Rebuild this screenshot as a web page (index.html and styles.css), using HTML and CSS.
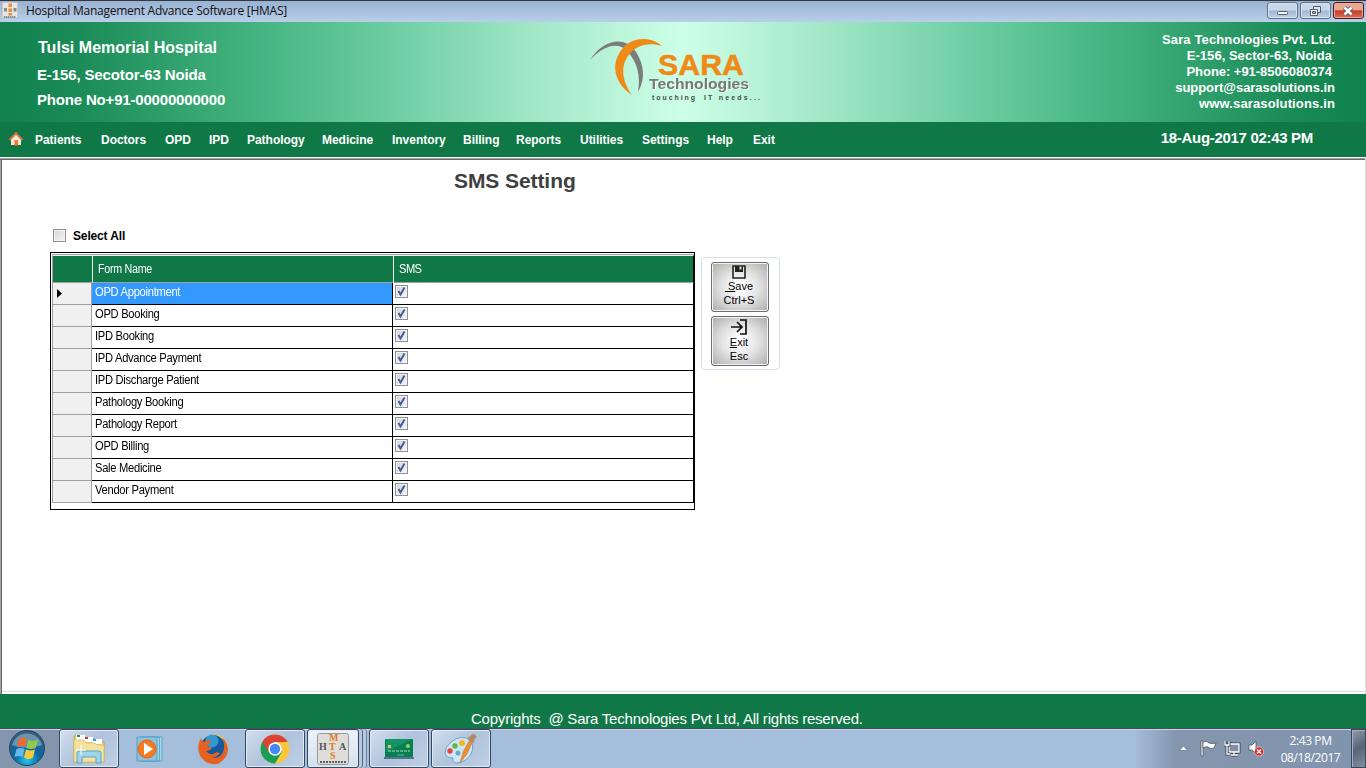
FILE: index.html
```html
<!DOCTYPE html>
<html lang="en">
<head>
<meta charset="utf-8">
<title>Hospital Management Advance Software [HMAS]</title>
<link rel="stylesheet" href="styles.css">
</head>
<body>
<div class="screen">
  <div class="titlebar">
    <svg class="app-icon" width="16" height="16" viewBox="0 0 32 32"><rect x=".5" y=".5" width="31" height="31" rx="2" fill="#e8e6e2" stroke="#aaa"/><path d="M13 3h7v7h-7zM13 13h7v7h-7zM13 22h7v5h-7z" fill="#e39044"/><path d="M4 12h6v7H4zM23 12h6v7h-6z" fill="#8b8781"/><path d="M4 30h24" stroke="#444" stroke-width="2" stroke-dasharray="3 1"/></svg>
    <span class="window-title">Hospital Management Advance Software [HMAS]</span>
    <div class="window-buttons">
      <button class="wbtn"><svg width="28" height="14"><rect x="9.500" y="7.500" width="10" height="3" rx="1" fill="#f8f8f8" stroke="#555b68"/></svg></button>
      <button class="wbtn"><svg width="28" height="14"><path d="M12.500 2.500h7v6h-7z" fill="#dce6f2" stroke="#555b68"/><path d="M9.500 5.500h7v6h-7z" fill="#f8f8f8" stroke="#555b68"/><path d="M11.500 7.500h3v2h-3z" fill="#a5bbd6" stroke="#555b68"/></svg></button>
      <button class="wbtn close"><svg width="28" height="14"><path d="M10.500 3.500l7 7m0-7l-7 7" stroke="#555b68" stroke-width="4.500"/><path d="M10.500 3.500l7 7m0-7l-7 7" stroke="#fff" stroke-width="2.600"/></svg></button>
    </div>
  </div>

  <header class="banner">
    <div class="hospital">
      <div class="h-name">Tulsi Memorial Hospital</div>
      <div class="h-addr">E-156, Secotor-63 Noida</div>
      <div class="h-phone">Phone No+91-00000000000</div>
    </div>
    <svg class="logo" width="180" height="72" viewBox="0 0 180 72">
      <path d="M0 25C12 6 34-1 46 17C56 33 54 47 48 57C51 41 47 27 38 17C28 5 12 12 0 25Z" fill="#7b7b7b"/>
      <path d="M42 60C25 49 19 29 33 13C42 2 61 1 72 11C58 7 46 10 38 21C29 34 34 49 42 60Z" fill="#ef8a17"/>
      <text class="logo-sara" x="68" y="40" textLength="86" lengthAdjust="spacingAndGlyphs">SARA</text>
      <text class="logo-tech" x="59" y="54" textLength="100" lengthAdjust="spacingAndGlyphs">Technologies</text>
      <text class="logo-tag" x="62" y="65" textLength="43">touching</text>
      <text class="logo-tag" x="114" y="65" textLength="56">IT needs...</text>
    </svg>
    <div class="company">
      <div class="c-line c1">Sara Technologies Pvt. Ltd.</div>
      <div class="c-line c2">E-156, Sector-63, Noida</div>
      <div class="c-line c3">Phone: +91-8506080374</div>
      <div class="c-line c4">support@sarasolutions.in</div>
      <div class="c-line c5">www.sarasolutions.in</div>
    </div>
  </header>

  <nav class="menu">
    <svg class="home" width="16" height="16" viewBox="0 0 16 16"><path d="M3 8v6h10V8L8 3z" fill="#efe9e4"/><path d="M1.500 9L8 2.200 14.500 9" fill="none" stroke="#d9703c" stroke-width="2"/><rect x="6.500" y="9" width="3.500" height="5.500" fill="#f07a1c"/></svg>
    <div class="menu-items"><a>Patients</a><a>Doctors</a><a>OPD</a><a>IPD</a><a>Pathology</a><a>Medicine</a><a>Inventory</a><a>Billing</a><a>Reports</a><a>Utilities</a><a>Settings</a><a>Help</a><a>Exit</a></div>
    <span class="clock">18-Aug-2017 02:43 PM</span>
  </nav>

  <main class="workspace">
    <h1>SMS Setting</h1>
    <label class="select-all"><i class="box"></i><span>Select All</span></label>
    <div class="content">
      <div class="grid" id="grid">
        <div class="row head"><div class="stub"></div><div class="name"><span>Form Name</span></div><div class="sms"><span>SMS</span></div></div>
      </div>
      <div class="actions">
        <button class="action"><svg width="16" height="14" viewBox="0 0 16 14"><path d="M2 1h12v12H2z" fill="none" stroke="#222" stroke-width="1.600"/><path d="M4 1h8v6H4z" fill="#222"/><path d="M8.500 1.500h2v3h-2z" fill="#ddd"/></svg><span><u>&nbsp;S</u>ave</span><span>Ctrl+S</span></button>
        <button class="action exit"><svg width="18" height="16" viewBox="0 0 18 16"><path d="M10 1h6v14h-6M1 8h11M7 3l5 5-5 5" fill="none" stroke="#111" stroke-width="1.700"/></svg><span><u>E</u>xit</span><span>Esc</span></button>
      </div>
    </div>
  </main>

  <footer class="copyright">Copyrights&nbsp; @ Sara Technologies Pvt Ltd, All rights reserved.</footer>

  <div class="taskbar">
    <div class="start"><svg width="38" height="38" viewBox="0 0 38 38"><defs><radialGradient id="orb" cx=".5" cy=".85" r=".8"><stop offset="0" stop-color="#24c4ee"/><stop offset=".45" stop-color="#0868a0"/><stop offset="1" stop-color="#345d7c"/></radialGradient></defs><circle cx="19" cy="19" r="17.500" fill="url(#orb)" stroke="#28445e"/><path d="M4 16a15.500 15.500 0 0 1 30 0q-15 6-30 0z" fill="#fff" opacity=".32"/><path d="M11 10q4-3 8 0l-2 8q-4-2-8 0z" fill="#ee6a30"/><path d="M20.500 10.500q5 3 10-.5l-3 9q-4 2-9 0z" fill="#92c94a"/><path d="M8.500 20q4-2 8 0l-2 8q-3-2-8 0z" fill="#69b8ea"/><path d="M18 20.500q5 2 9 0l-2 8q-5 3-9 0z" fill="#fac83a"/></svg></div>
    <div class="task"><svg width="34" height="30" viewBox="0 0 34 30"><path d="M2 2h10l2 3h9l2 3h7v20H2z" fill="#ead07b" stroke="#c5a75a"/><path d="M4 1h9v5H4z" fill="#fff"/><path d="M5 1h3v2H5z" fill="#2f9a3b"/><path d="M12 3h9v5h-9z" fill="#fff"/><path d="M13 3h3v2h-3z" fill="#c33"/><path d="M20 5h10v5H20z" fill="#fff"/><path d="M21 5h3v2h-3z" fill="#27a4e3"/><path d="M2 6h10l2 3h9l2 2h7v17H2z" fill="#f5e39d" stroke="#d5ba63" stroke-width=".7"/><path d="M5 29V19q0-2 2-2h20q2 0 2 2v10h-5v-6H10v6z" fill="#9ed5ed" stroke="#58a3c9"/><path d="M9 11v10M4 16h10" stroke="#fff"/></svg></div>
    <div class="plain wmp"><svg width="30" height="28" viewBox="0 0 30 28"><path d="M11 3h15v20l3 3H11z" fill="#8fc3de"/><path d="M7 2h19v24H7zM4 2h19.500v24H4z" fill="#a7d5e9" stroke="#4e9fc5" stroke-width=".8"/><path d="M1 2h20v24H1z" fill="#8cc2de" stroke="#589fbe"/><circle cx="11" cy="14" r="9" fill="#f37c20" stroke="#e9601c"/><path d="M8 8v12l9-6z" fill="#fff"/></svg></div>
    <div class="plain fox"><svg width="32" height="32" viewBox="0 0 32 32"><circle cx="17" cy="15" r="13.500" fill="#ffc52f"/><circle cx="16" cy="14" r="12" fill="#14599a"/><circle cx="15" cy="8" r="6.500" fill="#3498d0"/><path d="M4 5q1 4 3 4 3-2 7-2-1 4-4 6l5 2q-2 3-6 3 3 4 7 3 4-3 7-1-3 4-8 5 10 1 12-9 3 12-7 15C4 33-3 17 4 5z" fill="#e66222"/><path d="M27 16q1 11-9 14 12-1 13-14-1-8-6-11 3 5 2 11z" fill="#e66222"/></svg></div>
    <div class="task chrome"><svg width="30" height="30" viewBox="0 0 30 30"><circle cx="15" cy="15" r="14.500" fill="#fbc63b"/><path d="M15 15L2.400 7.800A14.500 14.500 0 0 0 15 29.500l7-12z" fill="#1a9d55"/><path d="M2.400 7.800A14.500 14.500 0 0 1 27.600 8H15l-6 11z" fill="#db4437"/><circle cx="15" cy="15" r="6.700" fill="#fff"/><circle cx="15" cy="15" r="5.200" fill="#4688f4"/></svg></div>
    <div class="task stacked"><svg width="32" height="32" viewBox="0 0 32 32"><rect x=".5" y=".5" width="31" height="31" rx="2" fill="#deddd9" stroke="#999"/><g class="mono-mark"><text x="12" y="8">M</text><text x="12" y="17">T</text><text x="13" y="26">S</text><text x="2" y="17" class="mark-dark">H</text><text x="22" y="17" class="mark-dark">A</text></g><path d="M3 29h26" stroke="#333" stroke-width="1.500" stroke-dasharray="2 1"/></svg></div>
    <div class="task card"><svg width="30" height="22" viewBox="0 0 30 22"><rect x="1" y="1" width="28" height="18" rx="1" fill="#077f50"/><path d="M2 1h26L2 14z" fill="#129468"/><path d="M0 20h30" stroke="#55738a" stroke-width="2"/><path d="M4 7h3v3H4z" fill="#e5bf54"/><circle cx="24" cy="8" r="2" fill="#8dd65a"/><path d="M4 13h22" stroke="#a9dcca" stroke-dasharray="3 1"/><path d="M13 17h7" stroke="#53bc95"/></svg></div>
    <div class="task paint"><svg width="34" height="32" viewBox="0 0 34 32"><path d="M7 9Q17 1 26 7q5 5 1 14-5 8-14 9-5 0-4-5-7 0-8-5Q1 14 7 9z" fill="#cfe6f4" stroke="#6da5ca"/><circle cx="6" cy="18" r="2.700" fill="#e2483b"/><circle cx="11" cy="13" r="2.700" fill="#5cb947"/><circle cx="18" cy="10" r="3" fill="#f0b629"/><circle cx="14" cy="20" r="2.500" fill="#69a9d2"/><path d="M16 30l3-11 6-11 3 2-5 11z" fill="#eb902d" stroke="#c37326" stroke-width=".5"/><path d="M25 8l-1-4q3 0 4-3 4 0 5 3-3 1-3 6z" fill="#b48a65"/></svg></div>
    <div class="tray">
      <svg class="caret" width="9" height="6"><path d="M4.500 0L8.500 4.500h-8z" fill="#fff" stroke="#5c6c80" stroke-width=".6"/></svg>
      <svg width="17" height="17" viewBox="0 0 17 17"><path d="M1 1h2v15H1z" fill="#fff" stroke="#3d4856" stroke-width=".7"/><path d="M3 2q4-2 6 1 3 1 7 0-1 3-2 5-3 2-6-1-2-1-5 1z" fill="#fff" stroke="#3d4856" stroke-width=".7"/></svg>
      <svg width="17" height="17" viewBox="0 0 17 17"><path d="M5 4h10v8H5zM7 15h7M10 12v3" fill="#8190a4" stroke="#344353" stroke-width="3"/><path d="M5 4h10v8H5zM7 15h7M10 12v3" fill="#8190a4" stroke="#fff" stroke-width="1.300"/><path d="M1 1v4h4V1M3 5v9h3" fill="none" stroke="#344353" stroke-width="3"/><path d="M1 1v4h4V1M3 5v9h3" fill="none" stroke="#fff" stroke-width="1.300"/></svg>
      <svg width="17" height="17" viewBox="0 0 17 17"><path d="M1 5h3l4-4v13l-4-4H1z" fill="#fff" stroke="#465365" stroke-width=".8"/><circle cx="11" cy="11.500" r="4.500" fill="#d72820" stroke="#fff" stroke-width=".5"/><path d="M9 9.500l4 4m0-4l-4 4" stroke="#fff" stroke-width="1.500"/></svg>
      <div class="datetime"><span>2:43 PM</span><span>08/18/2017</span></div>
      <div class="show-desktop"></div>
    </div>
  </div>
</div>
<script src="grid.js"></script>
</body>
</html>
```
FILE: styles.css
```css
* { box-sizing: border-box; }
body { margin: 0; font-family: "Liberation Sans", Arial, sans-serif; }
button { padding: 0; margin: 0; font: inherit; color: #000; }
svg { display: block; flex: none; }
.screen { width: 1366px; height: 768px; overflow: hidden; display: flex; flex-direction: column; background: #fff; }
.titlebar { height: 22px; flex: none; display: flex; border-top: 1px solid #34373b; background: linear-gradient(#98b2d2, #b9cfe9); padding-left: 2px; }
.app-icon { margin-top: 1px; }
.window-title { margin: 1px 0 0 8px; font: 12px/18px "Open Sans", "Noto Sans", sans-serif; color: #111; letter-spacing: -.25px; white-space: nowrap; }
.window-buttons { margin: 1px 2px 0 auto; display: flex; gap: 2px; height: 17px; }
.wbtn { width: 31px; border: 1px solid #5d7086; border-radius: 3px; background: linear-gradient(#c8d8ea 48%, #9fb7d3 52%, #bfd2e8); box-shadow: inset 0 0 0 1px #dae5f3; }
.wbtn.close { border-color: #511c18; background: linear-gradient(#e9a795 45%, #c63c26 52%, #d66e55); box-shadow: inset 0 0 0 1px #eba999; }
.mono-mark { font: bold 10px "Liberation Serif", serif; fill: #e07b18; }
.mark-dark { fill: #555; }

.banner { height: 100px; flex: none; display: flex; color: #fff; font-weight: bold; background: linear-gradient(90deg, #10814d 0, #1b8c58 80px, #40b07d 240px, #5cc495 340px, #aaebce 560px, #cdffe7 683px, #aaebce 800px, #5cc495 1026px, #40b07d 1126px, #1b8c58 1286px, #0f814c 100%); }
.hospital { width: 590px; padding: 15px 0 0 37px; white-space: nowrap; }
.h-name { font-size: 16px; line-height: 22px; padding-left: 1px; letter-spacing: .03px; }
.h-addr { font-size: 15px; line-height: 20px; margin-top: 6px; letter-spacing: -.13px; }
.h-phone { font-size: 15px; line-height: 20px; margin-top: 5px; letter-spacing: -.18px; }
.logo { margin-top: 13px; overflow: visible; }
.logo-sara { font: bold 30px "Liberation Sans", sans-serif; fill: #ef8a17; stroke: #ef8a17; stroke-width: .5px; }
.logo-tech { font: bold 14px "Liberation Sans", sans-serif; fill: #777; filter: drop-shadow(1px 1px 0 #effff7); }
.logo-tag { font: bold 7px "Liberation Sans", sans-serif; fill: #3f5048; }
.company { width: 596px; padding: 10px 31px 0 0; text-align: right; font-size: 13px; line-height: 16px; white-space: nowrap; }
.c1 { letter-spacing: .13px; }
.c2, .c3 { padding-right: 3px; }
.c2 { letter-spacing: .03px; }
.c3, .c4 { letter-spacing: -.04px; }
.c5 { letter-spacing: .14px; }

.menu { height: 35px; flex: none; display: flex; background: #0f7846; color: #fff; font-weight: bold; }
.home { margin: 9px 0 0 8px; }
.menu-items { margin: 10px 0 0 11px; display: grid; grid-template-columns: 66px 64px 44px 38px 75px 70px 71px 53px 64px 62px 65px 46px 60px; font-size: 12px; line-height: 16px; letter-spacing: -.03px; }
.clock { margin: 6px 53px 0 auto; font-size: 15px; line-height: 20px; letter-spacing: -.31px; white-space: nowrap; }

.workspace { height: 537px; flex: none; border-top: 1px solid #fff; box-shadow: inset 0 1px 0 #a0a0a0, inset 0 2px 0 #696969, inset 1px 0 0 #a0a0a0, inset 2px 0 0 #696969; padding-left: 50px; border-right: 1px solid #ddd; background: linear-gradient(#ddd, #ddd) 0 533px / 100% 1px no-repeat #fff; }
h1 { margin: 9px 0 0 404px; font-size: 21px; line-height: 28px; color: #404040; letter-spacing: -.08px; }
.select-all { margin: 31px 0 0 3px; display: flex; align-items: center; height: 18px; font-size: 12px; font-weight: bold; gap: 7px; letter-spacing: -.15px; }
.select-all span { padding-top: 2px; }
.box { width: 13px; height: 13px; flex: none; border: 1px solid #8e8f8f; background: linear-gradient(135deg, #cfd2d5, #f6f6f6); box-shadow: inset 0 0 0 1px #f4f4f4; display: block; }
.box svg { margin: -1px 0 0 -1px; }
.content { margin-top: 8px; display: flex; align-items: flex-start; }
.grid { width: 645px; height: 258px; border: 1px solid #000; padding: 1px 0 0 1px; font-size: 12px; }
.row { height: 22px; display: flex; }
.stub { width: 40px; background: #f0f0f0; border-right: 1px solid #a0a0a0; border-left: 1px solid #a0a0a0; border-bottom: 1px solid #a0a0a0; padding: 6px 0 0 4px; }
.name { width: 301px; border-right: 1px solid #000; border-bottom: 1px solid #000; padding: 0 0 0 3px; line-height: 18px; letter-spacing: -.3px; }
.name span, .head .sms span { display: inline-block; transform: scaleX(.93); transform-origin: 0 0; }
.sms { width: 301px; border-right: 1px solid #000; border-bottom: 1px solid #000; padding: 2px 0 0 2px; }
.current .name { background: #3399ff; color: #fff; }
.head { height: 29px; color: #fff; border-top: 1px solid #aaa; }
.head > div { background: #0f7846; border-bottom-color: #a0a0a0; border-right: 0; border-top: 1px solid #eee; padding-top: 0; }
.head .name, .head .sms { border-left: 1px solid #eee; padding-left: 5px; line-height: 27px; }
.head .name span { transform: scaleX(.89); }
.head .sms { border-right: 1px solid #000; letter-spacing: -.6px; }

.actions { margin: 5px 0 0 6px; width: 79px; height: 113px; border: 1px solid #d5dfe9; border-radius: 4px; padding: 4px 0 0 9px; display: flex; flex-direction: column; gap: 4px; }
.action { width: 58px; height: 50px; flex: none; display: flex; flex-direction: column; align-items: center; border: 1px solid #6c6c6c; border-radius: 3px; background: radial-gradient(ellipse, #fff 10%, #e0e0e0 50%, #aaa 100%); box-shadow: inset 0 0 0 1px #f4f4f4; font-size: 11px; line-height: 14px; padding: 2px 2px 0 0; }

.copyright { height: 34px; flex: none; background: #0f7846; color: #fff; font-size: 15px; line-height: 18px; letter-spacing: -.22px; padding: 16px 0 0 471px; white-space: nowrap; overflow: hidden; }
.taskbar { flex: 1; display: flex; border-top: 1px solid #424f5c; box-shadow: inset 0 1px 0 #c5d5e8; background: linear-gradient(90deg, #8496ae 0, #8496ae 59px, #a5bedb 60px, #a5bedb 1134px, #8496ae 1176px, #8194ad 100%); }
.start { width: 59px; padding-left: 8px; }
.task { width: 60px; margin-right: 2px; height: 39px; border: 1px solid #35475c; border-radius: 3px; box-shadow: inset 0 0 0 1px #e0ebf7; background: linear-gradient(135deg, #d3dfed, #afc3dc 50%, #bfd0e5); display: flex; align-items: center; justify-content: center; }
.plain { width: 62px; display: flex; align-items: center; }
.wmp { padding-left: 15px; }
.fox { padding-left: 14px; }
.stacked { width: 52px; margin-right: 10px; box-shadow: inset 0 0 0 1px #e0ebf7, 3px 0 0 #b5c8df, 4px 0 0 #53657b, 7px 0 0 #b5c8df, 8px 0 0 #73869f; background: linear-gradient(#edf3fa, #d4e0ee); }
.tray { margin-left: auto; display: flex; align-items: center; gap: 7px; color: #fff; }
.caret { margin-right: 5px; }
.datetime { width: 79px; padding-right: 2px; display: flex; flex-direction: column; align-items: center; font: 12px/17px "Open Sans", "Noto Sans", sans-serif; letter-spacing: -.4px; }
.show-desktop { align-self: stretch; width: 15px; margin-left: -7px; border: 1px solid #394757; box-shadow: inset 1px 1px 0 #a4b0bf; background: linear-gradient(145deg, #8e9cad, #566476 50%, #8290a2); }
```
FILE: grid.js
```js
const forms = ["OPD Appointment", "OPD Booking", "IPD Booking", "IPD Advance Payment", "IPD Discharge Patient", "Pathology Booking", "Pathology Report", "OPD Billing", "Sale Medicine", "Vendor Payment"];
const tick = '<i class="box"><svg width="13" height="13"><path d="M3.500 6l2 3.500 4-7" fill="none" stroke="#455d9d" stroke-width="2"/></svg></i>';
const pointer = '<svg width="5" height="9"><path d="M0 0l5 4.500L0 9z"/></svg>';
document.getElementById("grid").insertAdjacentHTML("beforeend", forms.map((name, i) =>
  `<div class="row${i ? "" : " current"}"><div class="stub">${i ? "" : pointer}</div><div class="name"><span>${name}</span></div><div class="sms">${tick}</div></div>`).join(""));
```
